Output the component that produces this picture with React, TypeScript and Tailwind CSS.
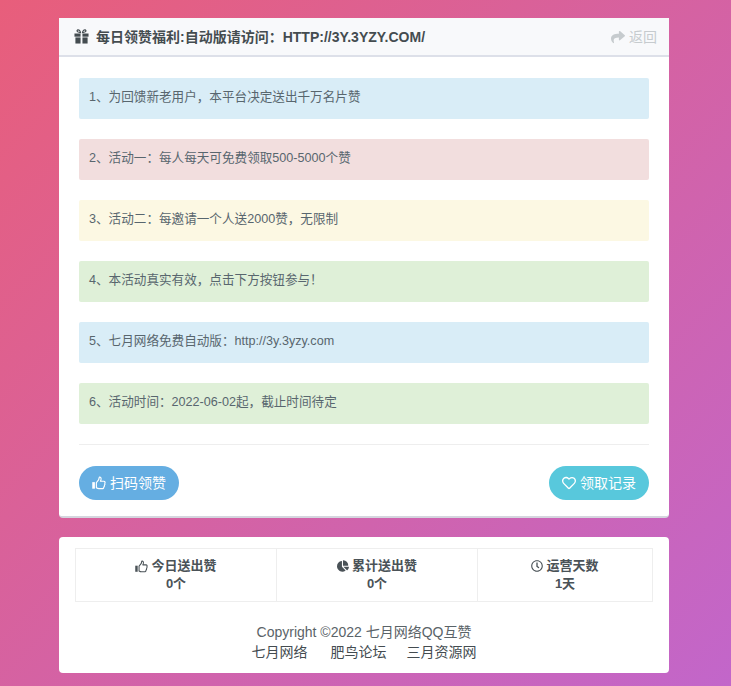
import { FaChartPie, FaRegClock, FaRegHeart, FaShare } from "react-icons/fa";

const notices = [
  { text: "1、为回馈新老用户，本平台决定送出千万名片赞", color: "bg-[#d9edf7]" },
  { text: "2、活动一：每人每天可免费领取500-5000个赞", color: "bg-[#f2dede]" },
  { text: "3、活动二：每邀请一个人送2000赞，无限制", color: "bg-[#fcf8e3]" },
  { text: "4、本活动真实有效，点击下方按钮参与！", color: "bg-[#dff0d8]" },
  { text: "5、七月网络免费自动版：http://3y.3yzy.com", color: "bg-[#d9edf7]" },
  { text: "6、活动时间：2022-06-02起，截止时间待定", color: "bg-[#dff0d8]" },
];

function ThumbIcon({ className }: { className?: string }) {
  return (
    <svg viewBox="0 0 16 16" className={className} fill="none" stroke="currentColor" strokeWidth="1.3" strokeLinejoin="round">
      <rect x="0.3" y="7" width="3" height="7.5" fill="currentColor" stroke="none" />
      <path d="M5 7.5 L7.5 4.5 C8 3.5 8 2 8.5 1.2 C10 1 10.8 2.5 10.2 4.5 L9.6 6 H13.5 C15 6 15.3 7.5 14.6 8.3 C15 9.2 14.8 10 14.2 10.6 C14.4 11.5 14 12.2 13.5 12.6 C13.6 13.8 12.8 14.5 11.5 14.5 H8 C6.8 14.5 5.8 14 5 13.5 Z" />
    </svg>
  );
}

function GiftIcon({ className }: { className?: string }) {
  return (
    <svg viewBox="0 0 16 16" className={className} fill="currentColor">
      <path d="M7.6 4.4 C5.6 4.4 2.8 3.8 2.6 2.2 C2.5 0.4 4.8 -0.2 6 0.9 C7 1.9 7.5 3 7.6 4.4 Z M6.2 3.2 C5.9 2.4 5.3 1.6 4.6 1.6 C3.9 1.6 3.8 2.2 4.4 2.6 C4.9 2.9 5.6 3.1 6.2 3.2 Z" fillRule="evenodd" />
      <path d="M8.4 4.4 C10.4 4.4 13.2 3.8 13.4 2.2 C13.5 0.4 11.2 -0.2 10 0.9 C9 1.9 8.5 3 8.4 4.4 Z M9.8 3.2 C10.1 2.4 10.7 1.6 11.4 1.6 C12.1 1.6 12.2 2.2 11.6 2.6 C11.1 2.9 10.4 3.1 9.8 3.2 Z" fillRule="evenodd" />
      <rect x="0.5" y="4.8" width="6.5" height="3.4" />
      <rect x="9" y="4.8" width="6.5" height="3.4" />
      <rect x="1.5" y="9" width="5.5" height="6.5" />
      <rect x="9" y="9" width="5.5" height="6.5" />
    </svg>
  );
}

const stats = [
  { icon: <ThumbIcon className="h-[13px] w-[13px]" />, label: "今日送出赞", value: "0个" },
  { icon: <FaChartPie className="text-[12px]" />, label: "累计送出赞", value: "0个" },
  { icon: <FaRegClock className="text-[12px]" />, label: "运营天数", value: "1天" },
];

export default function App() {
  return (
    <div className="flex h-[686px] w-[731px] flex-col overflow-hidden bg-[linear-gradient(135deg,#e85e7b,#c266ca)] pt-[18px] pl-[59px] font-['Liberation_Sans','Noto_Sans_CJK_SC',sans-serif] text-sm text-[#58666e]">
      <div className="w-[610px] rounded-sm border-b-2 border-[#d5d5de] bg-white">
        <div className="flex h-[39px] items-center justify-between border-b-2 border-[#dde0e9] bg-[#f8f9fb] pr-[12px] pl-[15px]">
          <h3 className="flex items-center gap-[7px] text-sm font-bold text-[#444c50]">
            <GiftIcon className="h-[15px] w-[15px]" />
            每日领赞福利:自动版请访问：HTTP://3Y.3YZY.COM/
          </h3>
          <a className="flex items-center gap-[4px] text-[#c6cbce]">
            <FaShare className="text-[14px]" />
            返回
          </a>
        </div>
        <div className="px-5 pt-[21px] pb-4">
          <div className="flex flex-col gap-5">
            {notices.map((n) => (
              <div key={n.text} className={`flex h-[41px] items-center rounded-[2px] px-2.5 pb-[2px] text-[12.6px] text-[#58666e] ${n.color}`}>
                {n.text}
              </div>
            ))}
          </div>
          <div className="mt-5 mb-[21px] h-px bg-[#eeeeee]" />
          <div className="flex items-center justify-between">
            <button className="flex h-[34px] w-[100px] items-center justify-center gap-1 rounded-full bg-[#65aee2] text-white">
              <ThumbIcon className="h-[14px] w-[14px]" />
              扫码领赞
            </button>
            <button className="flex h-[34px] w-[100px] items-center justify-center gap-1 rounded-full bg-[#58c8dc] text-white">
              <FaRegHeart className="text-[14px]" />
              领取记录
            </button>
          </div>
        </div>
      </div>

      <div className="mt-[19px] h-[136px] w-[610px] rounded-sm bg-white px-4 pt-[11px]">
        <div className="grid h-[54px] w-[578px] grid-cols-[200px_201px_1fr] border border-[#eeeeee]">
          {stats.map((s, i) => (
            <div
              key={s.label}
              className={`flex flex-col items-center justify-center text-[13px] font-bold leading-[18px] text-[#4a5257] ${i > 0 ? "border-l border-[#eeeeee]" : ""}`}
            >
              <div className="flex items-center gap-[3px]">
                {s.icon}
                {s.label}
              </div>
              <div>{s.value}</div>
            </div>
          ))}
        </div>
        <div className="mt-5 text-center leading-5 text-[#5a6368]">
          <p>Copyright ©2022 七月网络QQ互赞</p>
          <p className="flex justify-center gap-5">
            <a className="mr-[3px] text-[#444c50]">七月网络</a>
            <a className="text-[#444c50]">肥鸟论坛</a>
            <a className="text-[#444c50]">三月资源网</a>
          </p>
        </div>
      </div>
    </div>
  );
}
